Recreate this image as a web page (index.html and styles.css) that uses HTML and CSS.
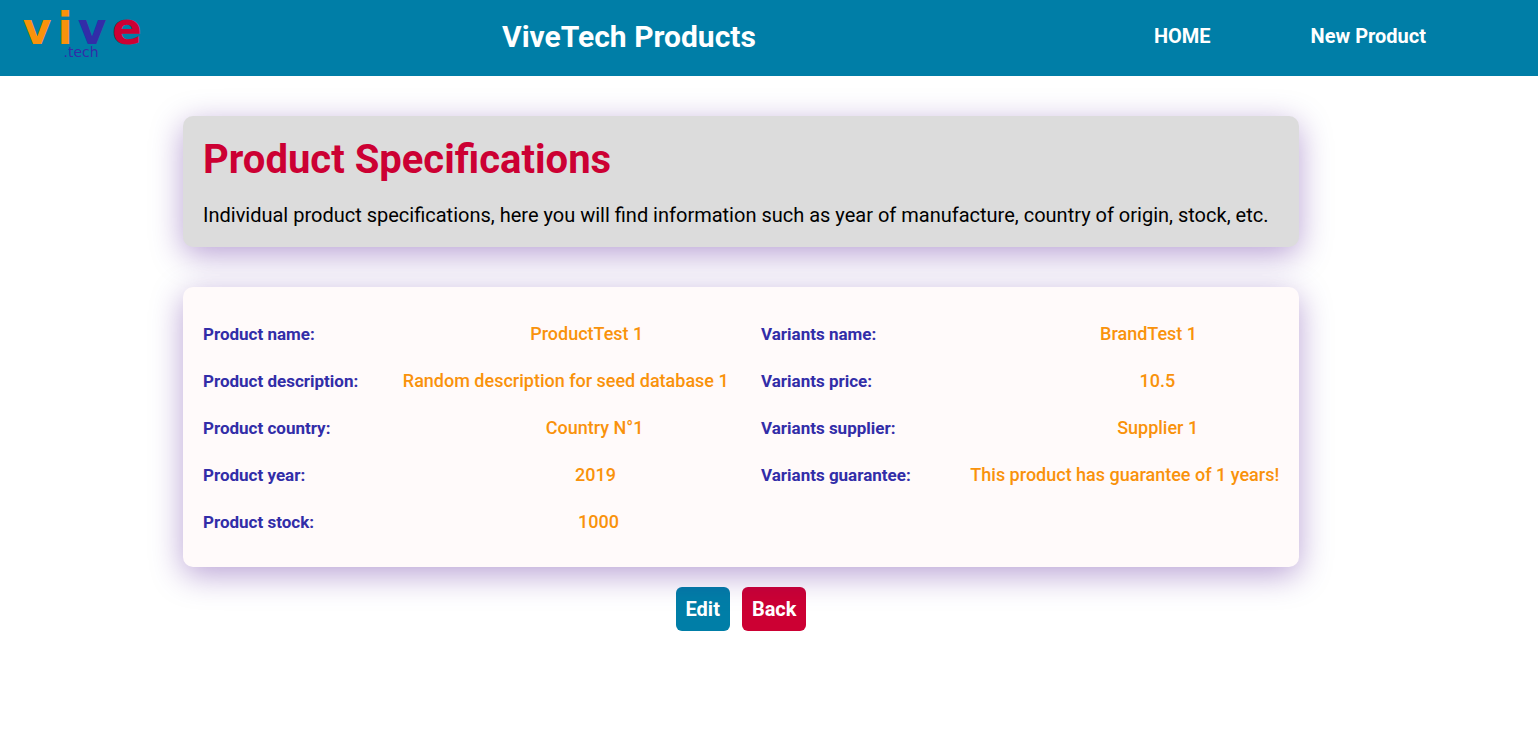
FILE: index.html
```html
<!DOCTYPE html>
<html lang="en">
<head>
  <meta charset="utf-8">
  <title>ViveTech Products</title>
  <link rel="stylesheet" href="styles.css">
</head>
<body>
  <header class="header">
    <a class="logo" href="#" aria-label="vive.tech">
      <svg class="logo-art" viewBox="0 0 130 52" width="130" height="52">
        <g class="logo-word">
          <text x="21" y="32" fill="#f9920b">v</text>
          <text x="49" y="32" fill="#f9920b">i</text>
          <text x="76" y="32" fill="#322da8">v</text>
          <text x="111" y="32" fill="#cc0033">e</text>
        </g>
        <text class="logo-sub" x="65" y="45">.tech</text>
      </svg>
    </a>
    <h2 class="brand">ViveTech Products</h2>
    <nav class="nav">
      <a href="#">HOME</a>
      <a href="#">New Product</a>
    </nav>
  </header>

  <main class="main">
    <section class="card intro">
      <h1 class="title">Product Specifications</h1>
      <p class="lead">Individual product specifications, here you will find information such as year of manufacture, country of origin, stock, etc.</p>
    </section>

    <section class="card specs">
      <dl class="column">
        <div class="row"><dt>Product name:</dt><dd>ProductTest 1</dd></div>
        <div class="row"><dt>Product description:</dt><dd>Random description for seed database 1</dd></div>
        <div class="row"><dt>Product country:</dt><dd>Country N°1</dd></div>
        <div class="row"><dt>Product year:</dt><dd>2019</dd></div>
        <div class="row"><dt>Product stock:</dt><dd>1000</dd></div>
      </dl>
      <dl class="column">
        <div class="row"><dt>Variants name:</dt><dd>BrandTest 1</dd></div>
        <div class="row"><dt>Variants price:</dt><dd>10.5</dd></div>
        <div class="row"><dt>Variants supplier:</dt><dd>Supplier 1</dd></div>
        <div class="row"><dt>Variants guarantee:</dt><dd>This product has guarantee of 1 years!</dd></div>
      </dl>
    </section>

    <div class="actions">
      <button class="button edit" type="button">Edit</button>
      <button class="button back" type="button">Back</button>
    </div>
  </main>
</body>
</html>
```

FILE: styles.css
```css
* {
  box-sizing: border-box;
  margin: 0;
  padding: 0;
}

body {
  font-family: Roboto, sans-serif;
  font-size: 20px;
  line-height: 24px;
  color: #000;
  background: #fff;
}

.header {
  display: grid;
  grid-template-columns: auto 1fr auto;
  align-items: center;
  padding: 12px 112px 12px 16px;
  color: #fff;
  background: #007ea7;
}

.logo,
.logo-art {
  display: block;
}

.logo-art {
  overflow: visible;
}

.logo-word {
  font: bold 44px "DejaVu Sans", sans-serif;
  text-anchor: middle;
}

.logo-sub {
  font: 14px "DejaVu Sans", sans-serif;
  text-anchor: middle;
  fill: #322da8;
}

.brand {
  padding-bottom: 2px;
  font-size: 30px;
  line-height: 36px;
  text-align: center;
}

.nav {
  display: flex;
  gap: 100px;
  padding: 0 0 4px 42px;
}

.nav a {
  font-weight: bold;
  color: #fff;
  text-decoration: none;
}

.main {
  padding: 40px 239px 40px 183px;
}

.card {
  position: relative;
  border-radius: 10px;
  box-shadow: 0 8px 32px rgba(66, 1, 141, 0.37);
}

.intro {
  padding: 20px;
  background: #dcdcdc;
}

.title {
  margin-bottom: 20px;
  font-size: 40px;
  line-height: 47px;
  color: #cc0033;
}

.specs {
  display: grid;
  grid-template-columns: 1fr 1fr;
  margin-top: 40px;
  padding: 35px 0 33px;
  background: snow;
}

.column {
  display: flex;
  flex-direction: column;
  gap: 23px;
  padding-left: 20px;
  margin-right: -10px;
}

.row {
  display: grid;
  grid-template-columns: auto 2fr auto 1fr;
  align-items: baseline;
  line-height: 23px;
}

.row dt {
  font-size: 17px;
  font-weight: bold;
  color: #322da8;
}

.row dd {
  grid-column: 3;
  font-size: 18px;
  font-weight: 500;
  color: #f9920b;
}

.actions {
  display: flex;
  justify-content: center;
  gap: 12px;
  margin-top: 20px;
}

.button {
  padding: 10px;
  border: 0;
  border-radius: 6px;
  font: bold 20px/24px Roboto, sans-serif;
  color: #fff;
}

.edit {
  background: #007ea7;
}

.back {
  background: #cc0033;
}
```
